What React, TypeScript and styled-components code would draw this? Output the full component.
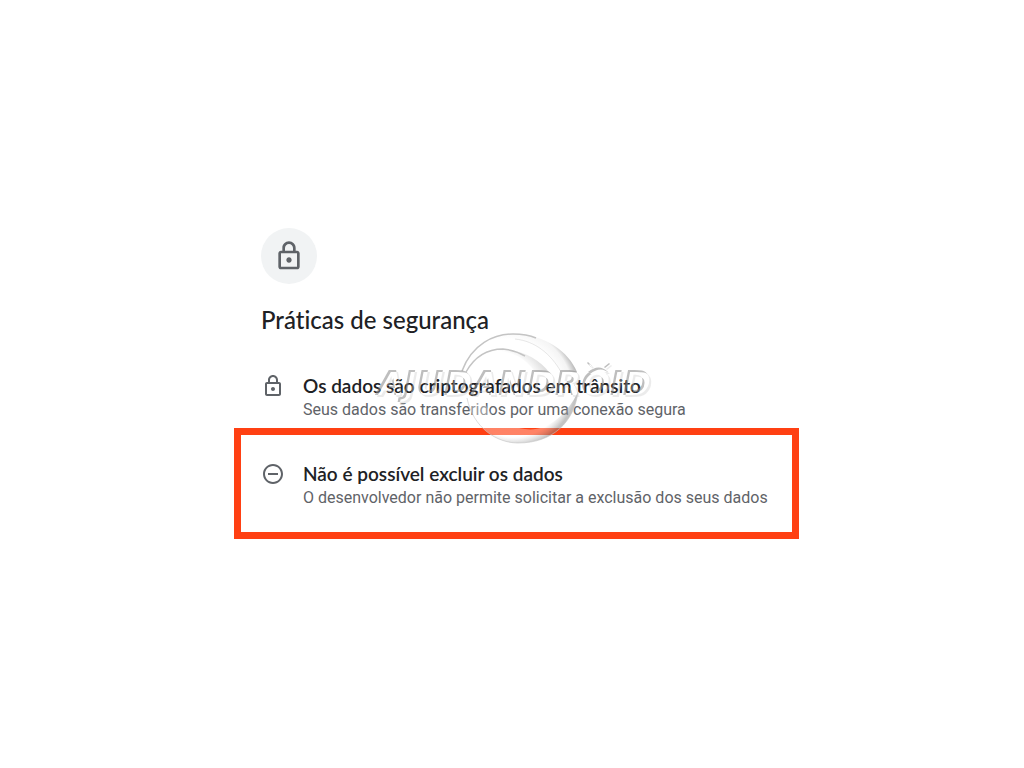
import React from 'react';
import styled, { createGlobalStyle } from 'styled-components';

const GlobalStyle = createGlobalStyle`
  * { box-sizing: border-box; }
  body { margin: 0; background: #fff; font-family: Roboto, "Liberation Sans", sans-serif; }
`;

const Page = styled.main`
  min-height: 100vh;
  padding: 0 0 2px 9px;
  display: flex;
  flex-direction: column;
  align-items: center;
  justify-content: center;
`;

const Panel = styled.section`
  position: relative;
  width: 100%;
  max-width: 565px;
`;

const Header = styled.header`
  padding: 0 27px;
`;

const Badge = styled.div`
  width: 56px;
  height: 56px;
  border-radius: 50%;
  background: #f1f3f4;
  display: flex;
  align-items: center;
  justify-content: center;
`;

const Title = styled.h1`
  margin: 20px 0 0;
  font: 500 24px/32px Lato, sans-serif;
  font-variant-ligatures: none;
  color: #202124;
`;

const List = styled.ul`
  list-style: none;
  margin: 0;
  padding: 0;
`;

const Item = styled.li<{ $highlighted?: boolean }>`
  display: flex;
  gap: 18px;
  padding: ${(p) => (p.$highlighted ? '27px 12px 22px 20px' : '38px 20px 6px 27px')};
  border: ${(p) => (p.$highlighted ? '7px solid #ff4013' : 'none')};
`;

const IconSlot = styled.span`
  flex: none;
  display: flex;
  width: 24px;
  height: 24px;
`;

const ItemTitle = styled.h2`
  margin: 0;
  font: 600 19px/24px Lato, sans-serif;
  font-variant-ligatures: none;
  color: #202124;
`;

const ItemText = styled.p`
  margin: 0;
  font-size: 16px;
  line-height: 24px;
  color: #5f6368;
`;

const Watermark = styled.svg`
  position: absolute;
  top: 102px;
  left: 141px;
  width: 280px;
  height: 120px;
  pointer-events: none;
`;

const Swirl = styled.g`
  fill: none;
  stroke: #c4c4c4;
`;

const Wordmark = styled.g`
  opacity: 0.85;
`;

const WordmarkText = styled.text`
  font: italic 700 34px "DejaVu Sans", sans-serif;
`;

const LockIcon = ({ size }: { size: number }) => (
  <svg width={size} height={size} viewBox="0 0 24 24" fill="#5f6368" aria-hidden="true">
    <path d="M18 8h-1V6c0-2.76-2.24-5-5-5S7 3.24 7 6v2H6c-1.1 0-2 .9-2 2v10c0 1.1.9 2 2 2h12c1.1 0 2-.9 2-2V10c0-1.1-.9-2-2-2zM9 6c0-1.66 1.34-3 3-3s3 1.34 3 3v2H9V6zm9 14H6V10h12v10zm-6-3c1.1 0 2-.9 2-2s-.9-2-2-2-2 .9-2 2 .9 2 2 2z" />
  </svg>
);

const MinusIcon = () => (
  <svg width="24" height="24" viewBox="0 0 24 24" fill="#5f6368" aria-hidden="true">
    <path d="M7 11v2h10v-2H7zm5-9C6.48 2 2 6.48 2 12s4.48 10 10 10 10-4.48 10-10S17.52 2 12 2zm0 18c-4.41 0-8-3.59-8-8s3.59-8 8-8 8 3.59 8 8-3.59 8-8 8z" />
  </svg>
);

const EmbossedLogo = () => (
  <Watermark viewBox="0 0 280 120">
    <defs>
      <filter id="emboss" x="-5%" y="-20%" width="110%" height="140%">
        <feOffset in="SourceAlpha" dx="2" dy="2" result="shifted" />
        <feComposite in="SourceAlpha" in2="shifted" operator="out" result="inner" />
        <feFlood floodColor="#888" floodOpacity="0.65" />
        <feComposite in2="inner" operator="in" result="shade" />
        <feComposite in="shifted" in2="SourceAlpha" operator="out" result="outer" />
        <feFlood floodColor="#ccc" floodOpacity="0.45" />
        <feComposite in2="outer" operator="in" result="light" />
        <feMerge>
          <feMergeNode in="light" />
          <feMergeNode in="shade" />
        </feMerge>
      </filter>
      <radialGradient id="rim" gradientUnits="userSpaceOnUse" cx="130" cy="66" r="76">
        <stop offset="0.75" stopColor="#fff" />
        <stop offset="0.9" stopColor="#f4f4f4" />
        <stop offset="1" stopColor="#b4b4b4" />
      </radialGradient>
      <radialGradient id="innerRim" gradientUnits="userSpaceOnUse" cx="116" cy="70" r="62">
        <stop offset="0.8" stopColor="#fff" />
        <stop offset="1" stopColor="#e0e0e0" />
      </radialGradient>
      <radialGradient id="bowl" gradientUnits="userSpaceOnUse" cx="138" cy="52" r="64">
        <stop offset="0.4" stopColor="#fff" stopOpacity="0.35" />
        <stop offset="0.86" stopColor="#fff" stopOpacity="0.35" />
        <stop offset="1" stopColor="#888" stopOpacity="0.5" />
      </radialGradient>
    </defs>
    <path fill="url(#rim)" d="M87 41C97 14 119 4 138 4C170 4 194 22 202 42L186 42C176 24 160 11 140 9C118 8 102 20 87 41Z" />
    <path fill="url(#innerRim)" d="M91 42C101 24 115 19 128 19C148 20 165 30 174 42L160 42C152 30 140 23 128 22C112 21 101 30 91 42Z" />
    <path fill="url(#bowl)" d="M92 68C98 98 122 113 143 113C178 113 199 92 203 62C190 88 170 102 150 99C124 96 112 84 108 66Z" />
    <Swirl>
      <path strokeWidth="1.5" d="M87 41C97 14 119 4 138 4Q152 4 161 8" />
      <path opacity="0.4" d="M140 9C160 11 176 24 186 42" />
      <path strokeWidth="1.5" d="M91 42C101 24 115 19 128 19Q140 20 150 26" />
      <path opacity="0.6" d="M92 68C98 98 122 113 143 113C178 113 199 92 203 62" />
    </Swirl>
    <Wordmark filter="url(#emboss)">
      <WordmarkText x="2" y="65">AJUDANDROID</WordmarkText>
      <path d="M213 42q11-9 20 0zM212 33l4 4 1-1-4-4zM234 33l-5 4 1 1 5-4z" />
    </Wordmark>
  </Watermark>
);

export default function App() {
  return (
    <Page>
      <GlobalStyle />
      <Panel>
        <Header>
          <Badge><LockIcon size={32} /></Badge>
          <Title>Práticas de segurança</Title>
        </Header>
        <List>
          <Item>
            <IconSlot><LockIcon size={24} /></IconSlot>
            <div>
              <ItemTitle>Os dados são criptografados em trânsito</ItemTitle>
              <ItemText>Seus dados são transferidos por uma conexão segura</ItemText>
            </div>
          </Item>
          <Item $highlighted>
            <IconSlot><MinusIcon /></IconSlot>
            <div>
              <ItemTitle>Não é possível excluir os dados</ItemTitle>
              <ItemText>O desenvolvedor não permite solicitar a exclusão dos seus dados</ItemText>
            </div>
          </Item>
        </List>
        <EmbossedLogo />
      </Panel>
    </Page>
  );
}
